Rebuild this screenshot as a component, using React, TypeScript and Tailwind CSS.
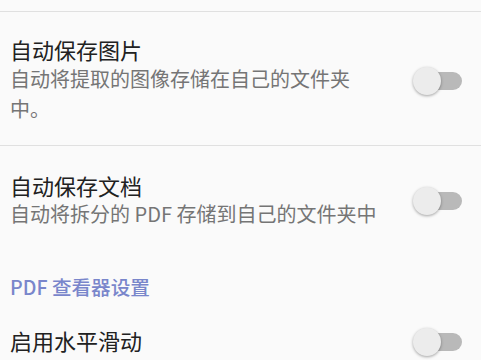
import React from "react";

const font = { fontFamily: '"Noto Sans CJK SC", "Noto Sans", sans-serif' };

function Toggle() {
  return (
    <div className="relative w-[48px] h-[28px] shrink-0">
      <div className="absolute left-[3px] top-[6px] w-[46px] h-[18px] rounded-full bg-[#b9b9b9]" />
      <div className="absolute left-0 top-[1px] w-[28px] h-[28px] rounded-full bg-[#ececec] shadow-[0_1px_3px_rgba(0,0,0,0.35)]" />
    </div>
  );
}

export default function App() {
  return (
    <div className="w-[481px] h-[360px] overflow-hidden bg-[#fafafa]" style={font}>
      <div className="h-[11px]" />
      <div className="h-px bg-[#e0e0e0]" />
      <div className="flex items-center pl-[10px] pr-[20px] pt-[23px] pb-[21px]">
        <div className="w-[375px]">
          <div className="text-[22px] leading-[29px] text-[#212121]">自动保存图片</div>
          <div className="text-[20px] leading-[30px] text-[#757575]">
            自动将提取的图像存储在自己的文件夹中。
          </div>
        </div>
        <div className="flex-1" />
        <Toggle />
      </div>
      <div className="h-px bg-[#e0e0e0]" />
      <div className="flex items-center pl-[10px] pr-[20px] pt-[25px]">
        <div className="w-[385px]">
          <div className="text-[22px] leading-[29px] text-[#212121]">自动保存文档</div>
          <div className="text-[20px] leading-[28px] text-[#757575]">
            自动将拆分的 PDF 存储到自己的文件夹中
          </div>
        </div>
        <div className="flex-1" />
        <Toggle />
      </div>
      <div className="pl-[10px] pt-[45px] text-[19.6px] leading-[28px] font-medium text-[#7986cb]">
        PDF 查看器设置
      </div>
      <div className="flex items-center pl-[10px] pr-[20px] pt-[25px]">
        <div className="text-[22px] leading-[29px] text-[#212121]">启用水平滑动</div>
        <div className="flex-1" />
        <Toggle />
      </div>
    </div>
  );
}
